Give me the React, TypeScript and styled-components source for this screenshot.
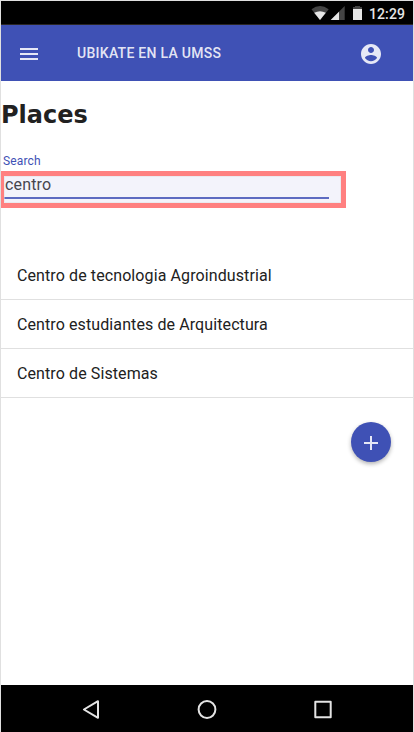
import React from 'react';
import styled, { createGlobalStyle } from 'styled-components';

const GlobalStyle = createGlobalStyle`
  * { box-sizing: border-box; }
  body { margin: 0; background: #fff; font-family: Roboto, sans-serif; }
  button { border: 0; padding: 0; background: none; font: inherit; }
  svg { display: block; }
`;

const Screen = styled.div`
  display: flex;
  flex-direction: column;
  width: 414px;
  height: 732px;
  overflow: hidden;
  border: 1px solid #e0e0e0;
  border-bottom: 0;
  background: #fff;
`;

const StatusBar = styled.div`
  display: flex;
  align-items: center;
  justify-content: flex-end;
  height: 24px;
  padding-right: 8px;
  background: #000;
  border-bottom: 1px solid #2a2624;
`;

const Clock = styled.span`
  width: 36px;
  margin-left: 6px;
  padding-top: 3px;
  color: #e6e6e6;
  font-size: 14px;
  font-weight: 500;
  line-height: 20px;
  letter-spacing: 0.1px;
  white-space: nowrap;
`;

const AppBar = styled.header`
  display: flex;
  align-items: center;
  height: 56px;
  padding: 0 30px 0 16px;
  background: #3f51b5;
  color: rgba(255, 255, 255, 0.87);
`;

const BarButton = styled.button`
  width: 24px;
  height: 24px;
  color: inherit;
  margin-top: 2px;
`;

const AppTitle = styled.h1`
  flex: 1;
  margin: 0 0 0 36px;
  font-size: 14px;
  font-weight: 500;
  line-height: 20px;
  letter-spacing: 0.27px;
`;

const Content = styled.main`
  display: flex;
  flex: 1;
  flex-direction: column;
`;

const Heading = styled.h2`
  margin: 20px 0 0;
  color: #212121;
  font: bold 24px/28px 'DejaVu Sans', sans-serif;
`;

const Field = styled.div`
  position: relative;
  display: flex;
  flex-direction: column;
  width: 328px;
  height: 71px;
  margin-top: 24px;
  padding-left: 2px;
`;

const Label = styled.label`
  color: #3f51b5;
  font-size: 12px;
  line-height: 16px;
  letter-spacing: 0.15px;
`;

const Input = styled.input`
  width: 326px;
  height: 30px;
  padding: 3px 2px 0;
  border: 0;
  border-bottom: 2px solid #3f51b5;
  outline: 0;
  background: none;
  color: #212121;
  font: 16px Roboto, sans-serif;
  letter-spacing: 0.15px;
`;

const Highlight = styled.div`
  position: absolute;
  top: 18px;
  left: -2px;
  width: 347px;
  height: 37px;
  border: 5px solid #ff8080;
  background: rgba(200, 200, 238, 0.22);
  box-shadow: inset 0 0 0 1px rgba(225, 225, 228, 0.5);
  pointer-events: none;
`;

const List = styled.ul`
  margin: 27px 0 0;
  padding: 0;
  list-style: none;
`;

const Item = styled.li`
  height: 49px;
  padding: 0 16px;
  border-bottom: 1px solid #e0e0e0;
  color: #212121;
  font-size: 16px;
  line-height: 50px;
  letter-spacing: 0.1px;
`;

const AddButton = styled.button`
  display: flex;
  align-items: center;
  justify-content: center;
  align-self: flex-end;
  width: 40px;
  height: 40px;
  margin: 24px 22px 0 0;
  border-radius: 50%;
  background: #3f51b5;
  color: rgba(255, 255, 255, 0.87);
  box-shadow: 0 2px 4px rgba(0, 0, 0, 0.3);
`;

const NavBar = styled.nav`
  display: flex;
  align-items: center;
  justify-content: center;
  gap: 92px;
  height: 47px;
  background: #000;
`;

const NavIcon = styled.svg`
  width: 24px;
  height: 24px;
  fill: none;
  stroke: #e4e4e4;
  stroke-width: 2;
  stroke-linejoin: round;
`;

const places = [
  'Centro de tecnologia Agroindustrial',
  'Centro estudiantes de Arquitectura',
  'Centro de Sistemas',
];

export default function App() {
  return (
    <>
      <GlobalStyle />
      <Screen>
        <StatusBar>
          <svg width="54" height="23" viewBox="0 0 54 23">
            <path d="M2.500 8.200Q11 2 19.700 8.200L11 19Z" fill="#444" />
            <path d="M5.200 11.800Q11 8.800 16.800 11.800L11 19Z" fill="#e6e6e6" />
            <path d="M35.700 5V19H21.700Z" fill="#444" />
            <path d="M30 10.700V19H21.700Z" fill="#e6e6e6" />
            <path d="M46 5H51V6H53V9H44V6H46Z" fill="#444" />
            <path d="M44 8H53V19H44Z" fill="#e6e6e6" />
          </svg>
          <Clock>12:29</Clock>
        </StatusBar>
        <AppBar>
          <BarButton aria-label="Menu">
            <svg width="24" height="24" viewBox="0 0 24 24" fill="currentColor">
              <path d="M3 18h18v-2H3v2zm0-5h18v-2H3v2zm0-7v2h18V6H3z" />
            </svg>
          </BarButton>
          <AppTitle>UBIKATE EN LA UMSS</AppTitle>
          <BarButton aria-label="Account">
            <svg width="24" height="24" viewBox="0 0 24 24" fill="currentColor">
              <path d="M12 2C6.480 2 2 6.480 2 12s4.480 10 10 10 10-4.480 10-10S17.520 2 12 2zm0 3c1.660 0 3 1.340 3 3s-1.340 3-3 3-3-1.340-3-3 1.340-3 3-3zm0 14.200c-2.500 0-4.710-1.280-6-3.220.030-1.990 4-3.080 6-3.080 1.990 0 5.970 1.090 6 3.080-1.290 1.940-3.500 3.220-6 3.220z" />
            </svg>
          </BarButton>
        </AppBar>
        <Content>
          <Heading>Places</Heading>
          <Field>
            <Label htmlFor="search">Search</Label>
            <Input id="search" defaultValue="centro" />
            <Highlight />
          </Field>
          <List>
            {places.map((place) => (
              <Item key={place}>{place}</Item>
            ))}
          </List>
          <AddButton aria-label="Add">
            <svg width="24" height="24" viewBox="0 0 24 24" fill="currentColor">
              <path d="M19 14h-6v6h-2v-6H5v-2h6V6h2v6h6z" />
            </svg>
          </AddButton>
        </Content>
        <NavBar>
          <NavIcon viewBox="0 0 24 24"><path d="M4.900 12.500 19 4.200V20.800Z" /></NavIcon>
          <NavIcon viewBox="0 0 24 24"><circle cx="12" cy="12.500" r="8.400" /></NavIcon>
          <NavIcon viewBox="0 0 24 24"><rect x="4.300" y="4.800" width="15.400" height="15.400" /></NavIcon>
        </NavBar>
      </Screen>
    </>
  );
}
